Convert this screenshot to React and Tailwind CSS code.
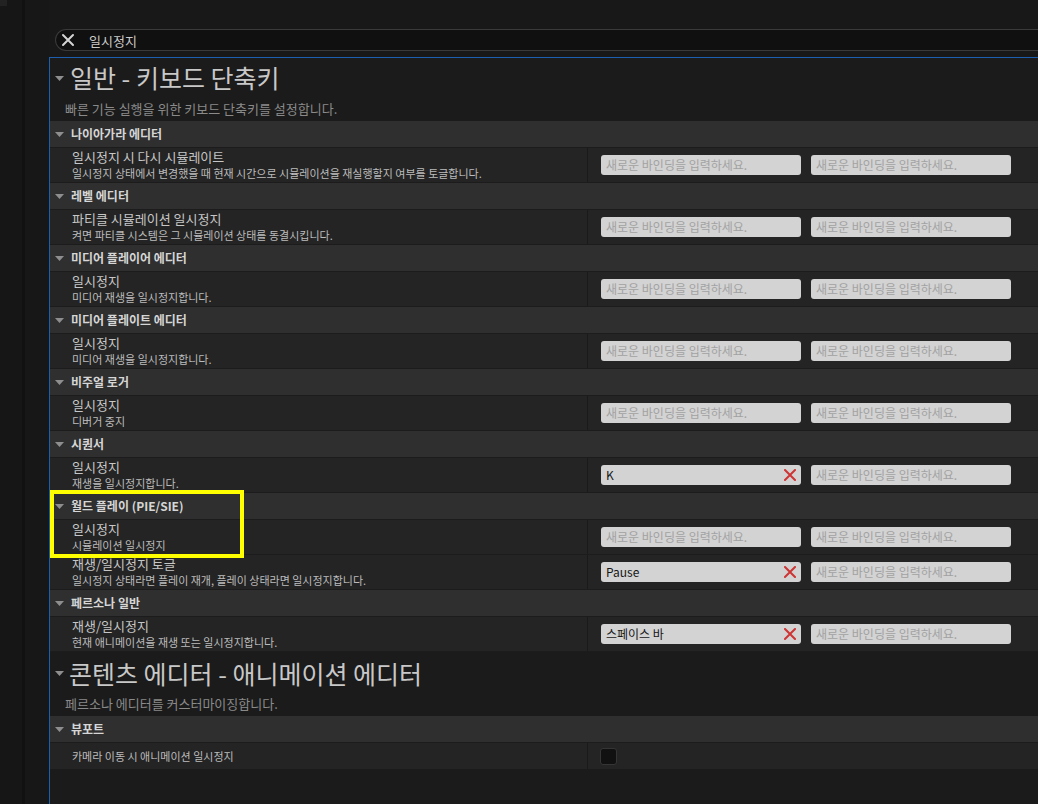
import React from "react";

const FONT = { fontFamily: '"Noto Sans CJK KR", "Noto Sans", sans-serif' };

function Tri({ className = "" }) {
  return (
    <svg width="9" height="5" viewBox="0 0 9 5" className={className}>
      <path d="M0 0H9L4.5 5Z" fill="#8e8e8e" />
    </svg>
  );
}

function RedX() {
  return (
    <svg width="12" height="12" viewBox="0 0 12 12" className="shrink-0">
      <path d="M1 1L11 11M11 1L1 11" stroke="#cf3434" strokeWidth="2" strokeLinecap="square" />
    </svg>
  );
}

function Input({ value }) {
  return (
    <div className="w-[200px] h-[20px] rounded-[3px] bg-[#d3d3d3] flex items-center pl-[5px] pr-[5px]">
      {value ? (
        <>
          <span className="flex-1 text-[12px] text-[#161616] leading-none">{value}</span>
          <RedX />
        </>
      ) : (
        <span className="text-[12px] text-[#a2a2a2] leading-none">새로운 바인딩을 입력하세요.</span>
      )}
    </div>
  );
}

function Header({ label }) {
  return (
    <div className="h-[27px] bg-[#2f2f2f] border-b border-[#1c1c1c] flex items-center pl-[5px] gap-[7px]">
      <Tri />
      <span className="text-[12px] font-semibold text-[#d6d6d6] leading-none">{label}</span>
    </div>
  );
}

function Row({ title, desc, value }) {
  return (
    <div className="h-[35px] bg-[#242424] border-b border-[#1c1c1c] flex">
      <div className="w-[537px] pl-[22px] flex flex-col justify-center">
        <div className="text-[13px] leading-[16px] text-[#c6c6c6]">{title}</div>
        <div className="text-[11px] leading-[16px] text-[#bcbcbc]">{desc}</div>
      </div>
      <div className="w-px bg-[#1a1a1a]" />
      <div className="flex items-center gap-[10px] pl-[13px]">
        <Input value={value} />
        <Input />
      </div>
    </div>
  );
}

const groups = [
  { h: "나이아가라 에디터", rows: [{ t: "일시정지 시 다시 시뮬레이트", d: "일시정지 상태에서 변경했을 때 현재 시간으로 시뮬레이션을 재실행할지 여부를 토글합니다." }] },
  { h: "레벨 에디터", rows: [{ t: "파티클 시뮬레이션 일시정지", d: "켜면 파티클 시스템은 그 시뮬레이션 상태를 동결시킵니다." }] },
  { h: "미디어 플레이어 에디터", rows: [{ t: "일시정지", d: "미디어 재생을 일시정지합니다." }] },
  { h: "미디어 플레이트 에디터", rows: [{ t: "일시정지", d: "미디어 재생을 일시정지합니다." }] },
  { h: "비주얼 로거", rows: [{ t: "일시정지", d: "디버거 중지" }] },
  { h: "시퀀서", rows: [{ t: "일시정지", d: "재생을 일시정지합니다.", v: "K" }] },
  {
    h: "월드 플레이 (PIE/SIE)",
    rows: [
      { t: "일시정지", d: "시뮬레이션 일시정지" },
      { t: "재생/일시정지 토글", d: "일시정지 상태라면 플레이 재개, 플레이 상태라면 일시정지합니다.", v: "Pause" },
    ],
  },
  { h: "페르소나 일반", rows: [{ t: "재생/일시정지", d: "현재 애니메이션을 재생 또는 일시정지합니다.", v: "스페이스 바" }] },
];

export default function App() {
  return (
    <div className="relative w-[1038px] h-[804px] overflow-hidden flex bg-[#171717]" style={FONT}>
      <div className="w-[22px] bg-[#161616] relative">
        <div className="absolute left-0 top-0 w-[7px] h-[6px] bg-[#222222]" />
      </div>
      <div className="w-[3px] bg-[#111111]" />
      <div className="w-[24px] bg-[#171717]" />
      <div className="flex-1 flex flex-col min-w-0 bg-[#181818]">
        <div className="h-[29px] shrink-0" />
        <div className="ml-[6px] h-[22px] shrink-0 rounded-l-full border border-r-0 border-[#3a3a3a] bg-[#101010] flex items-center">
          <svg width="14" height="14" viewBox="0 0 14 14" className="ml-[5px]">
            <path d="M2 2L12 12M12 2L2 12" stroke="#d4d4d4" strokeWidth="2" strokeLinecap="round" />
          </svg>
          <span className="ml-[14px] text-[13px] text-[#cacaca] leading-none">일시정지</span>
        </div>
        <div className="h-[6px] shrink-0" />
        <div className="flex-1 border-t border-l border-[#1d5fae] bg-[#1b1b1b] flex flex-col">
          <div className="h-[38px] flex items-center pl-[5px] gap-[6px]">
            <Tri className="mt-[3px]" />
            <span className="text-[25px] text-[#c8c8c8] leading-none">일반 - 키보드 단축키</span>
          </div>
          <div className="h-[25px] flex items-center pl-[15px]">
            <span className="text-[13px] text-[#8a8a8a] leading-none">빠른 기능 실행을 위한 키보드 단축키를 설정합니다.</span>
          </div>
          {groups.map((g) => (
            <div key={g.h}>
              <Header label={g.h} />
              {g.rows.map((r, i) => (
                <Row key={i} title={r.t} desc={r.d} value={r.v} />
              ))}
            </div>
          ))}
          <div className="h-[42px] flex items-center pl-[5px] gap-[5px]">
            <Tri />
            <span className="text-[25px] text-[#c8c8c8] leading-none">콘텐츠 에디터 - 애니메이션 에디터</span>
          </div>
          <div className="h-[22px] flex items-center pl-[15px] pb-[4px]">
            <span className="text-[13px] text-[#8a8a8a] leading-none">페르소나 에디터를 커스터마이징합니다.</span>
          </div>
          <Header label="뷰포트" />
          <div className="h-[26px] bg-[#242424] flex">
            <div className="w-[537px] pl-[22px] flex items-center">
              <span className="text-[11px] text-[#bcbcbc] leading-none">카메라 이동 시 애니메이션 일시정지</span>
            </div>
            <div className="w-px bg-[#1a1a1a]" />
            <div className="flex items-center pl-[12px]">
              <div className="w-[17px] h-[17px] rounded-[3px] bg-[#111111] border border-[#353535]" />
            </div>
          </div>
        </div>
      </div>
      <div className="absolute left-[50px] top-[490px] w-[194px] h-[68px] border-4 border-[#ffff00]" />
    </div>
  );
}
